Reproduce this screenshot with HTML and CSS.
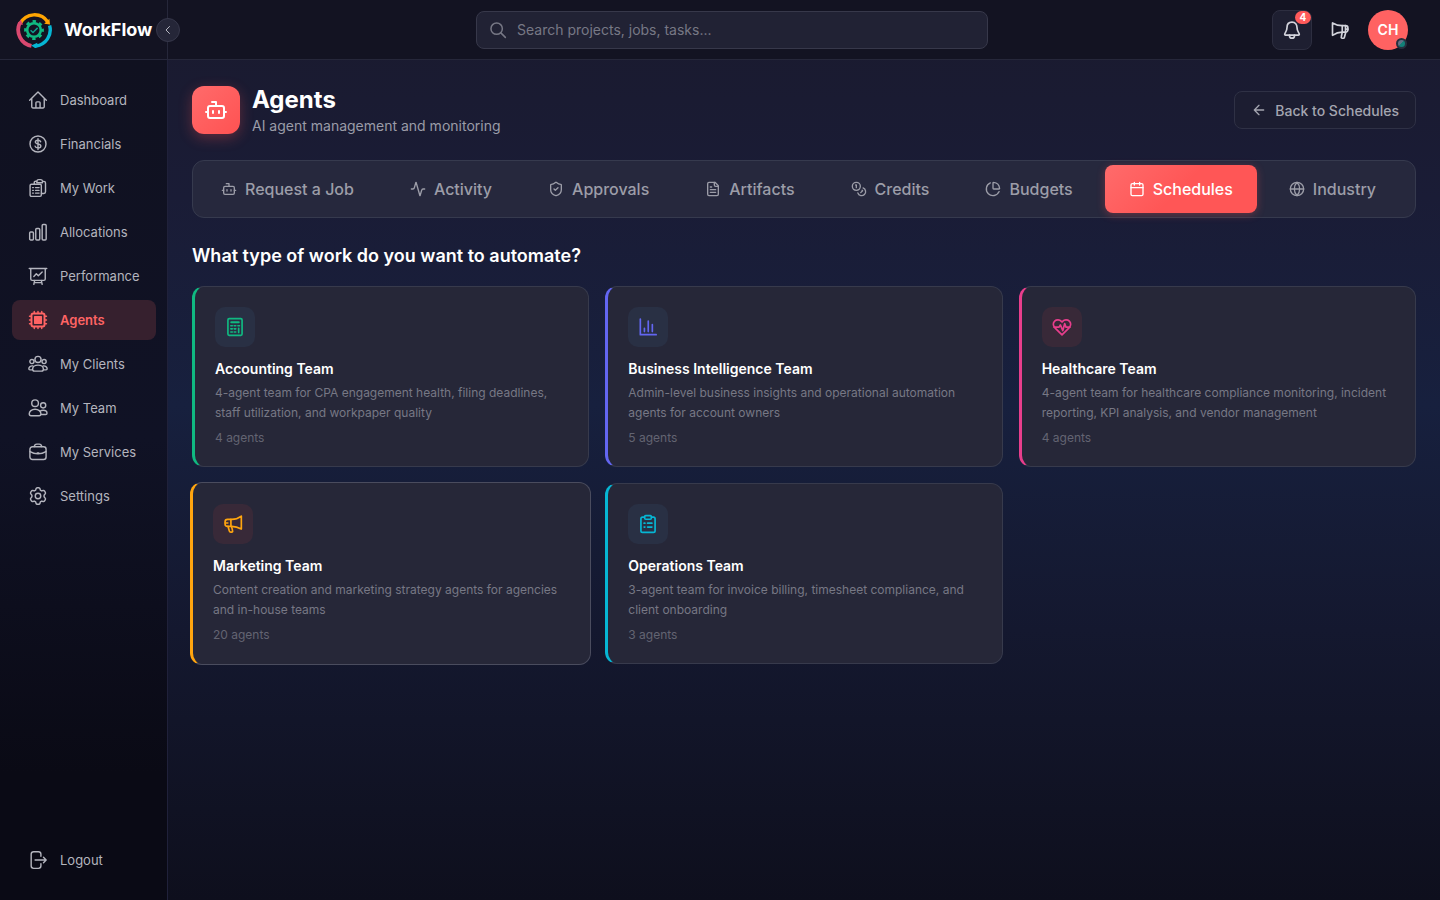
FILE: index.html
```html
<!DOCTYPE html>
<html lang="en">
<head>
<meta charset="utf-8">
<meta name="viewport" content="width=device-width, initial-scale=1">
<title>WorkFlow - Agents</title>
<link rel="stylesheet" href="styles.css">
</head>
<body>
<div class="app">
  <header class="topbar">
    <div class="brand">
      <svg class="brand-logo" viewBox="0 0 36 36" fill="none">
        <path d="M4.2 11.5A16 16 0 0 1 31.8 10" stroke="#ffa502" stroke-width="3.4"/>
        <path d="M33.6 13.5A16.2 16.2 0 0 1 20 34" stroke="#06b6d4" stroke-width="3.4"/>
        <path d="M15.5 33.8A16.2 16.2 0 0 1 4 10.5" stroke="#d9486f" stroke-width="3.8"/>
        <path d="M28.2 11.8l5.8.7-.6-5.8z" fill="#ffa502"/>
        <path d="M21.4 30.8l-6.2 2.6 5 3.4z" fill="#06b6d4"/>
        <path d="M1.4 12.6l3.2-5.2 2.4 5.4z" fill="#d9486f"/>
        <circle cx="18" cy="18" r="6.8" stroke="#10b981" stroke-width="2.6"/>
        <circle cx="18" cy="18" r="8.6" stroke="#10b981" stroke-width="2.6" stroke-dasharray="3.4 3.354" stroke-dashoffset="1.7"/>
        <path d="M14.6 18.2l2.4 2.3 4.6-4.6" stroke="#0f9f8c" stroke-width="1.5"/>
      </svg>
      <span class="brand-name">WorkFlow</span>
      <button class="collapse" type="button" aria-label="Collapse sidebar">
        <svg viewBox="0 0 24 24"><path d="M15 5l-7 7 7 7"/></svg>
      </button>
    </div>
    <div class="tools">
      <div class="search-area">
        <label class="search">
          <svg viewBox="0 0 24 24"><circle cx="10.2" cy="10.2" r="7.6"/><path d="M15.8 15.8l6 6"/></svg>
          <input type="search" placeholder="Search projects, jobs, tasks..." aria-label="Search">
        </label>
      </div>
      <div class="actions">
        <button class="icon-button framed" type="button" aria-label="Notifications">
          <svg viewBox="0 0 24 24"><path d="M12 2.6c-4 0-6 2.8-6 6.4 0 5-2.8 6.4-2.8 8.2 0 .6.4.9 1 .9h15.600c.6 0 1-.3 1-.9 0-1.800-2.800-3.200-2.800-8.200 0-3.600-2-6.400-6-6.400z"/><path d="M9 18.200v.6a3 3 0 0 0 6 0v-.6"/></svg>
          <span class="badge">4</span>
        </button>
        <button class="icon-button" type="button" aria-label="Announcements">
          <svg viewBox="0 0 24 24"><path d="M3 3.600v14.800c4-2.600 7.500-3.800 11.500-3.800h4.200a2.800 2.800 0 0 0 2.800-2.800V9.600a2.800 2.800 0 0 0-2.800-2.800h-4.200C10.500 6.800 7 6 3 3.600z"/><path d="M14.700 6.800v7.800M18.600 6.800v9l-1.300 5a1.400 1.400 0 0 1-1.500 1.100h-1.200c-.8 0-1.300-.7-1.100-1.500l1.200-5.700M18.600 11h2.700"/></svg>
        </button>
        <button class="avatar" type="button" aria-label="Account">CH<span class="presence"></span></button>
      </div>
    </div>
  </header>

  <aside class="sidebar">
    <nav class="nav">
      <a class="nav-item" href="#"><svg viewBox="0 0 24 24"><path d="M2 12.400L12 2.500l10 9.900M4.500 10v10.200c0 .8.500 1.300 1.300 1.300h12.400c.8 0 1.300-.5 1.300-1.300V10M9.500 21.300v-6c0-.7.400-1.100 1.100-1.100h2.800c.7 0 1.100.4 1.100 1.100v6"/></svg>Dashboard</a>
      <a class="nav-item" href="#"><svg viewBox="0 0 24 24"><circle cx="12" cy="12" r="9.600"/><path d="M12 5.500v13M15.200 9.200C14.800 8 13.600 7.500 12 7.500c-1.900 0-3.200.8-3.200 2.200 0 3.200 6.600 1.300 6.600 4.600 0 1.500-1.400 2.300-3.400 2.300-1.900 0-3.100-.7-3.500-2"/></svg>Financials</a>
      <a class="nav-item" href="#"><svg viewBox="0 0 24 24"><rect x="2.500" y="7.500" width="13.500" height="14.500" rx="1.600"/><path d="M5.500 11.500h1M9 11.500h4.300M5.500 14.800h1M9 14.800h4.300M5.500 18.100h1M9 18.100h4.300"/><path d="M7.500 7.200V5.500c0-1 .7-1.700 1.700-1.700h1.300M16.200 18.600H19c1.300 0 2-.7 2-2V6c0-1.300-.7-2-2-2h-1.500"/><path d="M10.600 3.900c.2-1.300 1-2 2.200-2h2.400c1.200 0 2 .7 2.200 2v1.700h-6.800z"/></svg>My Work</a>
      <a class="nav-item" href="#"><svg viewBox="0 0 24 24"><rect x="2" y="12" width="4.500" height="9.500" rx="1.200"/><rect x="9.300" y="7.800" width="4.800" height="13.700" rx="1.200"/><rect x="17" y="3" width="4.800" height="18.500" rx="1.200"/></svg>Allocations</a>
      <a class="nav-item" href="#"><svg viewBox="0 0 24 24"><path d="M1.500 3h21M3.300 3v12.500c0 1 .7 1.700 1.700 1.700h14c1 0 1.700-.7 1.700-1.700V3M8 17.200l-1 4.800M16 17.200l1 4.800M7.400 19.900h9.200M7 12.500l3-3.200 2.400 2.300L17 7.200"/></svg>Performance</a>
      <a class="nav-item active" href="#"><svg viewBox="0 0 24 24"><rect x="4.200" y="4.200" width="15.600" height="15.600" rx="2" stroke-width="2.300"/><rect x="8" y="8" width="8" height="8" fill="currentColor"/><path d="M7.500 1.800v2M12 1.800v2M16.500 1.800v2M7.500 20.200v2M12 20.200v2M16.500 20.200v2M1.800 7.500h2M1.800 12h2M1.800 16.500h2M20.200 7.500h2M20.200 12h2M20.200 16.500h2"/></svg>Agents</a>
      <a class="nav-item" href="#"><svg viewBox="0 0 24 24"><circle cx="12" cy="6.500" r="3.700"/><circle cx="4.700" cy="9" r="2.500"/><circle cx="19.300" cy="9" r="2.500"/><path d="M12 13.300c-4 0-6.500 2.400-6.500 5 0 1.400.9 2.200 2.300 2.200h8.400c1.400 0 2.300-.8 2.300-2.200 0-2.600-2.500-5-6.500-5zM5.700 14.300C3.200 14 1 15.600 1 17.700c0 .9.500 1.300 1.300 1.300h2.800M18.300 14.300c2.500-.3 4.700 1.300 4.700 3.400 0 .9-.5 1.300-1.300 1.300h-2.800"/></svg>My Clients</a>
      <a class="nav-item" href="#"><svg viewBox="0 0 24 24"><circle cx="8.500" cy="6.200" r="4"/><circle cx="18.200" cy="8.800" r="3.100"/><path d="M8.500 13.500c-4.200 0-7 2.600-7 5.400 0 1.500.8 2.300 2.200 2.300h9.600c1.400 0 2.200-.8 2.200-2.300 0-2.800-2.800-5.400-7-5.400zM14.600 15.600c1-.7 2.300-1 3.600-1 2.800 0 4.600 1.600 4.600 3.600 0 1-.6 1.600-1.600 1.600h-5.500"/></svg>My Team</a>
      <a class="nav-item" href="#"><svg viewBox="0 0 24 24"><rect x="2.300" y="5.700" width="19.400" height="15.300" rx="3"/><path d="M7.500 5.500c.3-2 1.100-3 3-3h3c1.900 0 2.700 1 3 3M2.500 11.500c5.500 3.600 13.500 3.600 19 0M11 13h2"/></svg>My Services</a>
      <a class="nav-item" href="#"><svg viewBox="0 0 24 24"><circle cx="12" cy="12" r="3.300"/><path d="M9.600 3.300c.2-.8.700-1.200 1.500-1.200h1.800c.8 0 1.300.4 1.500 1.200l.4 1.700 1.600.9 1.700-.5c.8-.2 1.400 0 1.800.7l.9 1.600c.4.700.3 1.400-.3 1.900L19.300 11v2l1.200 1.400c.6.500.7 1.200.3 1.900l-.9 1.600c-.4.700-1 .9-1.800.7l-1.700-.5-1.600.9-.4 1.700c-.2.800-.7 1.200-1.500 1.200h-1.800c-.8 0-1.300-.4-1.500-1.200L9.200 19l-1.600-.9-1.700.5c-.8.200-1.400 0-1.800-.7l-.9-1.600c-.4-.7-.3-1.400.3-1.900L4.700 13v-2L3.500 9.600c-.6-.5-.7-1.200-.3-1.900l.9-1.600c.4-.7 1-.9 1.800-.7l1.700.5L9.200 5z"/></svg>Settings</a>
    </nav>
    <a class="nav-item" href="#"><svg viewBox="0 0 24 24"><path d="M15.500 7.500V5c0-2-1-3-3-3H6.800c-2 0-3 1-3 3v14c0 2 1 3 3 3h5.700c2 0 3-1 3-3v-2.500M8.500 12h13M18.600 8.800l3.200 3.200-3.200 3.200"/></svg>Logout</a>
  </aside>

  <main class="main">
    <div class="page-head">
      <div class="page-icon"><svg viewBox="0 0 24 24"><path d="M12 8V4H8"/><rect x="4" y="8" width="16" height="12" rx="2"/><path d="M2 14h2M20 14h2M15 13v2M9 13v2"/></svg></div>
      <div class="page-titles">
        <h1>Agents</h1>
        <p>AI agent management and monitoring</p>
      </div>
      <button class="back" type="button"><svg viewBox="0 0 24 24"><path d="M12 19l-7-7 7-7M19 12H5"/></svg>Back to Schedules</button>
    </div>

    <div class="tabs">
      <button class="tab" type="button"><svg viewBox="0 0 24 24"><path d="M12 8V4H8"/><rect x="4" y="8" width="16" height="12" rx="2"/><path d="M2 14h2M20 14h2M15 13v2M9 13v2"/></svg>Request a Job</button>
      <button class="tab" type="button"><svg viewBox="0 0 24 24"><path d="M22 12h-2.500a2 2 0 0 0-1.900 1.500l-2.400 8.300a.25.25 0 0 1-.4 0L9.200 2.200a.25.25 0 0 0-.4 0l-2.400 8.300A2 2 0 0 1 4.500 12H2"/></svg>Activity</button>
      <button class="tab" type="button"><svg viewBox="0 0 24 24"><path d="M20 13c0 5-3.500 7.500-7.700 9a1 1 0 0 1-.6 0C7.500 20.500 4 18 4 13V6a1 1 0 0 1 1-1c2 0 4.500-1.200 6.200-2.700a1.200 1.200 0 0 1 1.600 0C14.500 3.800 17 5 19 5a1 1 0 0 1 1 1z"/><path d="M9 12l2 2 4-4"/></svg>Approvals</button>
      <button class="tab" type="button"><svg viewBox="0 0 24 24"><path d="M15 2H6a2 2 0 0 0-2 2v16a2 2 0 0 0 2 2h12a2 2 0 0 0 2-2V7z"/><path d="M14 2v4a2 2 0 0 0 2 2h4M10 9H8M16 13H8M16 17H8"/></svg>Artifacts</button>
      <button class="tab" type="button"><svg viewBox="0 0 24 24"><circle cx="8" cy="8" r="6"/><path d="M18.100 10.400A6 6 0 1 1 10.300 18M7 6h1v4M16.700 13.900l.7.700-2.800 2.800"/></svg>Credits</button>
      <button class="tab" type="button"><svg viewBox="0 0 24 24"><path d="M21 12c.6 0 1-.4.900-1A10 10 0 0 0 13 2.100c-.6-.1-1 .3-1 .9v8a1 1 0 0 0 1 1z"/><path d="M21.200 15.900A10 10 0 1 1 8 2.800"/></svg>Budgets</button>
      <button class="tab selected" type="button"><svg viewBox="0 0 24 24"><path d="M8 2v4M16 2v4M3 10h18"/><rect x="3" y="4" width="18" height="18" rx="2"/></svg>Schedules</button>
      <button class="tab" type="button"><svg viewBox="0 0 24 24"><circle cx="12" cy="12" r="10"/><path d="M12 2a14.500 14.500 0 0 0 0 20 14.500 14.500 0 0 0 0-20M2 12h20"/></svg>Industry</button>
    </div>

    <h2>What type of work do you want to automate?</h2>

    <div class="cards">
      <button class="card green" type="button">
        <span class="tile"><svg viewBox="0 0 24 24"><rect x="3.500" y="2" width="17" height="20" rx="1.500"/><path d="M7.500 6.200h9" stroke-width="2.400"/><path d="M7 10.500h1.800M11.100 10.500h1.800M15.500 10.500h1.800M7 14.200h1.800M11.100 14.200h1.800M7 18h1.800M11.100 18h1.800M16.400 13.500v5"/></svg></span>
        <strong>Accounting Team</strong>
        <span class="desc">4-agent team for CPA engagement health, filing deadlines, staff utilization, and workpaper quality</span>
        <span class="count">4 agents</span>
      </button>
      <button class="card violet" type="button">
        <span class="tile"><svg viewBox="0 0 24 24"><path d="M2.800 2.500v18.700h19"/><path d="M7.700 13.500v4M12.300 5v12.500M17.200 9v8.500"/></svg></span>
        <strong>Business Intelligence Team</strong>
        <span class="desc">Admin-level business insights and operational automation agents for account owners</span>
        <span class="count">5 agents</span>
      </button>
      <button class="card pink" type="button">
        <span class="tile tile-warm"><svg viewBox="0 0 24 24"><path d="M12 21.500L3.500 13C1 10.500 1 7 3.200 4.900s5.900-2 8.100.3l.7.800.7-.8c2.200-2.300 5.900-2.400 8.100-.3S23 10.500 20.500 13z"/><path d="M2.500 12.200h6L10 9.500l3 6.800L15.200 8l1.600 4.200h4.700"/></svg></span>
        <strong>Healthcare Team</strong>
        <span class="desc">4-agent team for healthcare compliance monitoring, incident reporting, KPI analysis, and vendor management</span>
        <span class="count">4 agents</span>
      </button>
      <button class="card orange raised" type="button">
        <span class="tile tile-warm"><svg viewBox="0 0 24 24"><path d="M22 2.500v15.600c-4-2.300-7.500-3.300-11.500-3.300H5.300a2.800 2.800 0 0 1-2.800-2.800V9.300a2.800 2.800 0 0 1 2.800-2.800h5.200c4 0 7.500-1 11.500-4z"/><path d="M9.500 6.500v8.300M2.800 10.800h3M6 14.800l1.600 5.700c.3.900.9 1.300 1.700 1.300h1c1 0 1.500-.8 1.200-1.800l-1.300-5.100"/></svg></span>
        <strong>Marketing Team</strong>
        <span class="desc">Content creation and marketing strategy agents for agencies and in-house teams</span>
        <span class="count">20 agents</span>
      </button>
      <button class="card cyan" type="button">
        <span class="tile"><svg viewBox="0 0 24 24"><path d="M7.800 3.700H5.500c-1.200 0-2 .8-2 2V20c0 1.200.8 2 2 2h13c1.200 0 2-.8 2-2V5.700c0-1.200-.8-2-2-2h-2.300"/><rect x="8" y="2" width="8" height="4.300" rx="1.200"/><path d="M7.300 11h1M11.500 11h5.200M7.300 15.700h1M11.500 15.700h5.200"/></svg></span>
        <strong>Operations Team</strong>
        <span class="desc">3-agent team for invoice billing, timesheet compliance, and client onboarding</span>
        <span class="count">3 agents</span>
      </button>
    </div>
  </main>
</div>
</body>
</html>
```
FILE: styles.css
```css
* { box-sizing: border-box; }

body {
  margin: 0;
  font-family: Inter, "Liberation Sans", sans-serif;
  font-size: 14px;
  color: #fff;
  background: #0e0f1e;
}

h1, h2, p { margin: 0; }
button { font-family: inherit; cursor: pointer; }
a { color: inherit; text-decoration: none; }

svg {
  display: block;
  flex: none;
  fill: none;
  stroke: currentColor;
  stroke-width: 1.7;
  stroke-linecap: round;
  stroke-linejoin: round;
}

.app {
  display: grid;
  grid-template: auto 1fr / 168px minmax(0, 1fr);
  min-height: 100vh;
  background: linear-gradient(180deg, #1a1a2e 0%, #1a1c36 22%, #17203e 45%, #14182f 70%, #0e0f1d 100%);
}

/* Top bar */
.topbar {
  grid-column: 1 / -1;
  display: grid;
  grid-template-columns: 168px minmax(0, 1fr);
  height: 60px;
  background: #131322;
  border-bottom: 1px solid #26273a;
}

.brand {
  position: relative;
  display: flex;
  align-items: center;
  gap: 12px;
  padding-left: 16px;
  border-right: 1px solid #26273a;
}

.brand-logo { width: 36px; height: 36px; stroke: none; stroke-linecap: butt; }
.brand-name { font-size: 18px; font-weight: 700; }

.collapse {
  position: absolute;
  right: -13px;
  display: grid;
  place-items: center;
  width: 24px;
  height: 24px;
  padding: 0;
  color: #b7b8c2;
  background: #252638;
  border: 1px solid #36374a;
  border-radius: 50%;
}
.collapse svg { width: 12px; height: 12px; stroke-width: 2; }

.tools {
  display: flex;
  align-items: center;
  gap: 8px;
  padding: 0 32px;
}

.search-area { flex: 1; display: flex; justify-content: center; }

.search {
  display: flex;
  align-items: center;
  gap: 10px;
  width: 100%;
  max-width: 512px;
  height: 38px;
  padding: 0 12px;
  color: #777885;
  background: #212234;
  border: 1px solid #37384a;
  border-radius: 8px;
}
.search svg { width: 18px; height: 18px; stroke-width: 2; }
.search input {
  flex: 1;
  min-width: 0;
  padding: 0;
  font: inherit;
  color: #fff;
  background: none;
  border: 0;
  outline: 0;
}
.search input::placeholder { color: #777885; opacity: 1; }

.actions { display: flex; align-items: center; gap: 8px; }

.icon-button {
  position: relative;
  display: grid;
  place-items: center;
  width: 40px;
  height: 40px;
  padding: 0;
  color: #d3d4dc;
  background: none;
  border: 1px solid transparent;
  border-radius: 8px;
}
.icon-button.framed { background: #1e1f31; border-color: #2d2e40; }
.icon-button svg { width: 20px; height: 20px; stroke-width: 2; }

.badge {
  position: absolute;
  top: 0;
  right: 0;
  min-width: 16px;
  padding: 0 4px;
  font-size: 10px;
  font-weight: 700;
  line-height: 13px;
  color: #fff;
  background: #ff5a5a;
  border-radius: 7px;
}

.avatar {
  position: relative;
  width: 40px;
  height: 40px;
  padding: 0;
  font-size: 14px;
  font-weight: 600;
  color: #fff;
  background: #ff6262;
  border: 0;
  border-radius: 50%;
}
.presence {
  position: absolute;
  right: 1px;
  bottom: 1px;
  width: 11px;
  height: 11px;
  background: linear-gradient(135deg, #647085 50%, #128078 50%);
  border: 2px solid #26303f;
  border-radius: 50%;
}

/* Sidebar */
.sidebar {
  display: flex;
  flex-direction: column;
  justify-content: space-between;
  padding: 20px 11px 20px 12px;
  background: linear-gradient(180deg, #101120 0%, #101225 45%, #0a0a15 85%);
  border-right: 1px solid #20213a;
}

.nav { display: flex; flex-direction: column; gap: 4px; }

.nav-item {
  display: flex;
  align-items: center;
  gap: 12px;
  height: 40px;
  padding: 0 16px;
  font-size: 13px;
  white-space: nowrap;
  color: #b4b5be;
  border-radius: 8px;
}
.nav-item svg { width: 20px; height: 20px; }
.nav-item.active { color: #ff6464; font-weight: 600; background: #36202e; }

/* Page */
.main { padding: 24px; }

.page-head { display: flex; align-items: center; gap: 12px; }

.page-icon {
  display: grid;
  place-items: center;
  width: 48px;
  height: 48px;
  background: linear-gradient(135deg, #ff6b6b, #ff5252);
  border-radius: 12px;
  box-shadow: 0 4px 14px #ff52524d;
}
.page-icon svg { width: 24px; height: 24px; stroke-width: 2; }

.page-titles { flex: 1; }
h1 { font-size: 24px; line-height: 32px; font-weight: 700; }
.page-titles p { line-height: 20px; color: #9b9ca8; }

.back {
  display: flex;
  align-items: center;
  gap: 8px;
  height: 38px;
  padding: 0 16px;
  font-size: 14px;
  font-weight: 500;
  color: #a4a5b0;
  background: #1c1d31;
  border: 1px solid #2f3145;
  border-radius: 8px;
}
.back svg { width: 16px; height: 16px; stroke-width: 2; }

.tabs {
  display: flex;
  gap: 8px;
  margin: 24px 0;
  padding: 4px;
  background: #26283d;
  border: 1px solid #363a4e;
  border-radius: 12px;
}
.tab {
  display: flex;
  align-items: center;
  justify-content: center;
  gap: 8px;
  height: 48px;
  padding: 0 24px;
  font-size: 16px;
  font-weight: 500;
  color: #9c9da8;
  white-space: nowrap;
  background: none;
  border: 0;
  border-radius: 8px;
}
.tab svg { width: 16px; height: 16px; stroke-width: 2; }
.tab.selected {
  color: #fff;
  background: linear-gradient(135deg, #ff6b6b, #ff5656 50%);
  box-shadow: 0 2px 8px #ff52524d;
}

h2 { margin-bottom: 16px; font-size: 18px; line-height: 28px; font-weight: 600; }

.cards {
  display: grid;
  grid-template-columns: repeat(3, minmax(0, 1fr));
  gap: 16px;
}

.card {
  display: flex;
  flex-direction: column;
  align-items: flex-start;
  padding: 20px;
  text-align: left;
  color: #fff;
  background: #262738;
  border: 1px solid #373a4c;
  border-left: 3px solid var(--accent);
  border-radius: 12px;
}
.card.raised { margin: -1px -2px; padding: 21px 20px; border-color: #4a4c5e; border-left-color: var(--accent); }

.green { --accent: #10b981; }
.violet { --accent: #6366f1; }
.pink { --accent: #e83e8c; }
.orange { --accent: #ffa50f; }
.cyan { --accent: #06b6d4; }

.tile {
  display: grid;
  place-items: center;
  width: 40px;
  height: 40px;
  margin-bottom: 12px;
  color: var(--accent);
  background: #293044;
  border-radius: 10px;
}
.tile-warm { background: #382938; }
.tile svg { width: 20px; height: 20px; stroke-width: 2; }

.card strong { margin-bottom: 4px; font-size: 14px; line-height: 20px; font-weight: 600; }
.desc { margin-bottom: 6px; font-size: 12px; line-height: 20px; color: #777885; }
.count { font-size: 12px; line-height: 17px; color: #636472; }
```
